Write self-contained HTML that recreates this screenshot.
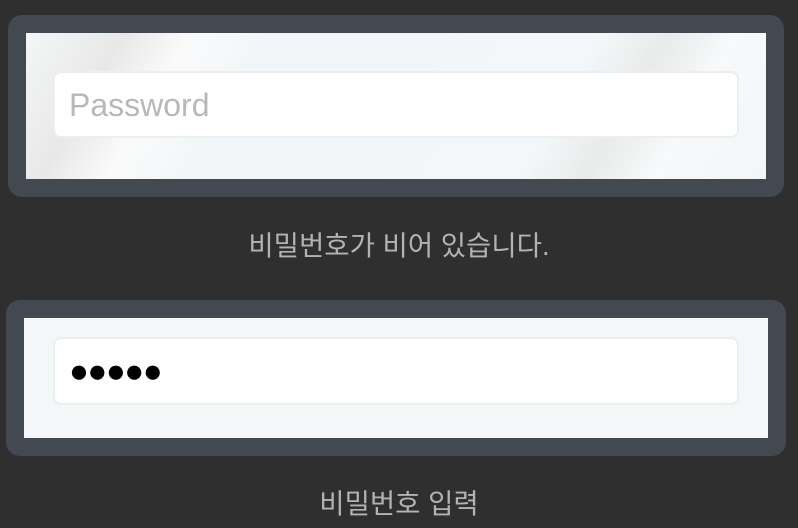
<!DOCTYPE html>
<html><head><meta charset="utf-8"><style>
body{margin:0;width:798px;height:528px;background:#2f2f2f;position:relative;overflow:hidden;font-family:"Liberation Sans","Noto Sans CJK KR",sans-serif}
.o{position:absolute;background:#434950;border-radius:14px}
.i{position:absolute;background:linear-gradient(120deg,#f4f6f7 0%,#e8e8e8 12%,#fafafa 20%,#f2f6f8 30%,#f3f7f9 70%,#e9eaea 78%,#f7f9fa 86%,#f3f6f8 100%)}
.f{position:absolute;background:#fff;border:2px solid #eceeef;border-radius:8px;box-sizing:border-box}
.t{position:absolute;left:0;width:798px;text-align:center;color:#b3b3b3;font-size:27.5px}
</style></head><body>
<div class="o" style="left:8px;top:15px;width:776px;height:182px"></div>
<div class="i" style="left:26px;top:33px;width:740px;height:146px"></div>
<div class="f" style="left:53px;top:71px;width:686px;height:67px"><span style="position:absolute;left:14px;top:14px;font-size:32px;color:#b8b8b8">Password</span></div>
<div class="t" style="top:223px">비밀번호가 비어 있습니다.</div>
<div class="o" style="left:6px;top:300px;width:780px;height:156px"></div>
<div class="i" style="left:24px;top:318px;width:744px;height:120px;background:#f3f7f8"></div>
<div class="f" style="left:53px;top:337px;width:686px;height:68px"><span style="position:absolute;left:14px;top:13px;font-size:33px;color:#000;letter-spacing:-1.5px">●●●●●</span></div>
<div class="t" style="top:481px">비밀번호 입력</div>
</body></html>
